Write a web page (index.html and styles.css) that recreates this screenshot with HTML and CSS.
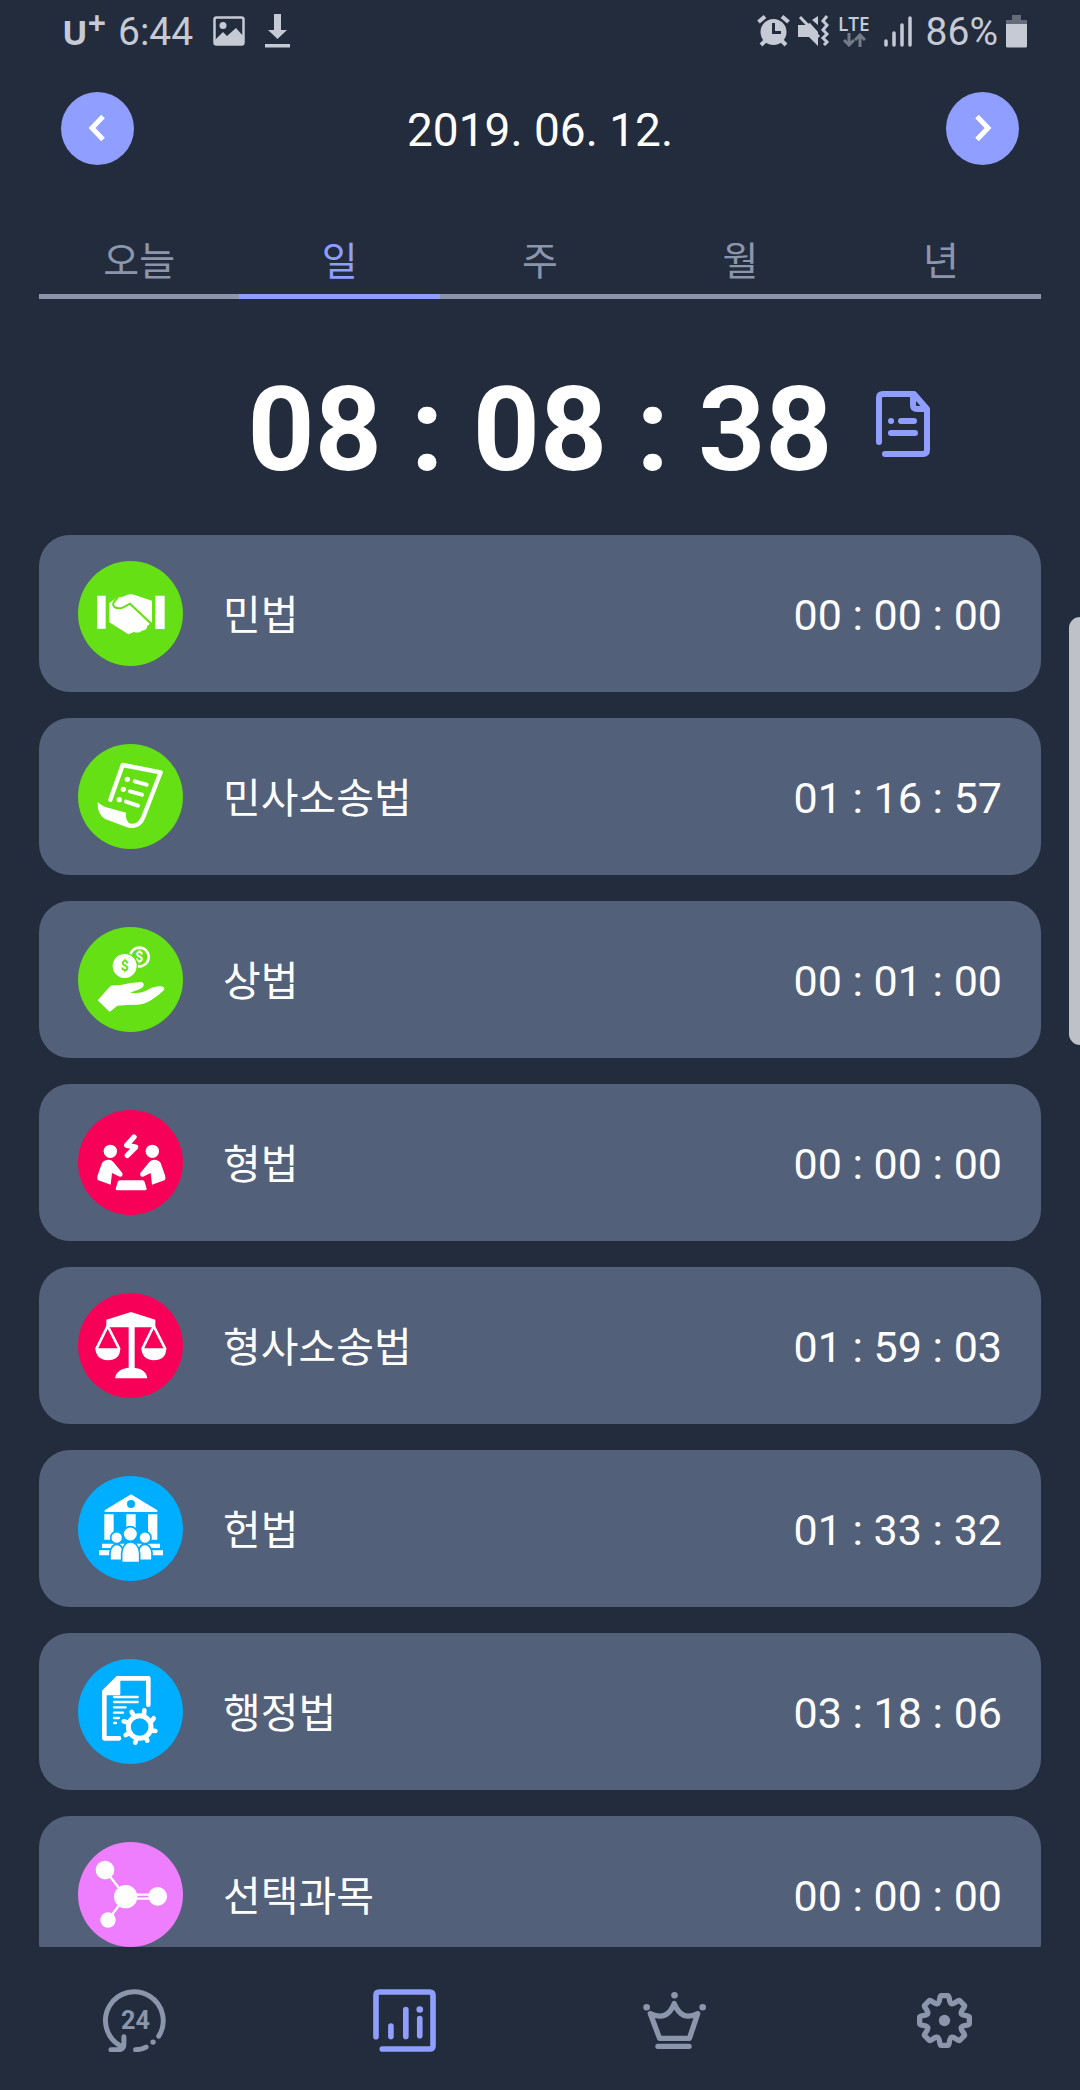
FILE: index.html
```html
<!DOCTYPE html>
<html lang="ko">
<head>
<meta charset="utf-8">
<meta name="viewport" content="width=device-width, initial-scale=1">
<title>학습 시간 통계</title>
<link rel="stylesheet" href="styles.css">
</head>
<body>
<div class="app">
  <div class="status">
    <div class="status-group">
      <span class="carrier">U<span class="carrier-plus">+</span></span>
      <span class="status-text clock">6:44</span>
      <svg class="icon-photo" width="32" height="30" viewBox="0 0 32 30"><rect x="1.500" y="1.500" width="29" height="27" rx="2" fill="none" stroke="currentColor" stroke-width="2.500"/><circle cx="10" cy="9.500" r="3.500" fill="currentColor"/><path d="M2 24 10 16l4 4 9-8 8 9v7H2z" fill="currentColor"/></svg>
      <svg width="25" height="34" viewBox="0 0 25 34" fill="currentColor"><path d="M9 0h7v16h6L12.500 25 3 16h6zM0 30h25v3.500H0z"/></svg>
    </div>
    <div class="status-group status-right">
      <svg width="33" height="32" viewBox="0 0 33 32"><circle cx="16.500" cy="17" r="13" fill="currentColor"/><path d="M1.500 7 8 1.500M31.500 7 25 1.500M4 30l5-5M29 30l-5-5" stroke="currentColor" stroke-width="4"/><path class="cut" d="M16.500 8v9.500H24" fill="none" stroke-width="3"/></svg>
      <svg width="32" height="32" viewBox="0 0 32 32"><path d="M0 10h7l5-2 8 9v14l-9-9H0zM20 1v9l-6-5z" fill="currentColor"/><path d="M2 2l19 20" stroke="currentColor" stroke-width="3"/><path d="M29 1l-4 5 4 4-4 5 4 4-4 4 4 4-3 3" fill="none" stroke="currentColor" stroke-width="3"/></svg>
      <div class="network"><span>LTE</span><svg width="24" height="14" viewBox="0 0 24 14" fill="none" stroke="currentColor" stroke-width="3"><path d="M7 0v12M2 7l5 5 5-5M18 14V2M13 7l5-5 5 5"/></svg></div>
      <svg class="signal" width="28" height="31" viewBox="0 0 28 31" stroke="currentColor" stroke-width="3.500" stroke-linecap="round"><path d="M2 25v4M10 17v12M18 9v20M26 2v27"/></svg>
      <span class="status-text">86%</span>
      <svg class="battery" width="21" height="33" viewBox="0 0 21 33" fill="currentColor"><path opacity=".4" d="M6 0h9v5h6v4H0V5h6z"/><path d="M0 9h21v22q0 1.500-1.500 1.500h-18Q0 32.500 0 31z"/></svg>
    </div>
  </div>

  <header class="date-bar">
    <button class="round" type="button" aria-label="이전 날짜"><svg width="73" height="73" viewBox="0 0 73 73"><path d="M42 24.500 31 36l11 11.500"/></svg></button>
    <h1 class="date">2019. 06. 12.</h1>
    <button class="round" type="button" aria-label="다음 날짜"><svg width="73" height="73" viewBox="0 0 73 73"><path d="M31 24.500 42 36 31 47.500"/></svg></button>
  </header>

  <nav class="tabs" aria-label="기간">
    <button class="tab" type="button">오늘</button>
    <button class="tab tab-active" type="button" aria-current="true">일</button>
    <button class="tab" type="button">주</button>
    <button class="tab" type="button">월</button>
    <button class="tab" type="button">년</button>
  </nav>

  <section class="total">
    <span class="total-time">08 : 08 : 38</span>
    <button class="note" type="button" aria-label="기록 보기"><svg width="54" height="66" viewBox="0 0 54 66" fill="none" stroke="currentColor" stroke-width="6" stroke-linecap="round" stroke-linejoin="round"><path d="M3 51V7q0-4 4-4h31l13 15v41q0 4-4 4H9M37 4v10q0 4 4 4h9M15 30h.1M25 30h13M15 42h24"/></svg></button>
  </section>

  <main class="list">
    <article class="card">
      <svg class="badge green" viewBox="144 107 315 315"><path d="M201 211h26v99h-26zM376 211h28v100h-28z"/><path d="M238 233 258 219 283 213Q298 203 314 209L366 226V290L352 302Q350 316 336 316 326 325 312 320L295 327 238 291z"/><path class="line" stroke-width="6" d="M262 219Q243 235 252 244 264 253 280 246L300 235 362 294"/></svg>
      <h2 class="name">민법</h2><span class="time">00 : 00 : 00</span>
    </article>
    <article class="card">
      <svg class="badge green" viewBox="144 657 315 315"><path class="stroke" stroke-width="13" d="M241 824 278 720 392 742 341 874Q329 907 300 902"/><path d="M203 831Q215 844 240 850L288 863Q284 885 301 897L314 908Q295 911 275 901L225 882Q201 868 203 831z"/><path class="stroke" stroke-width="12" d="M314 769l36 10M300 799l36 10M288 830l36 12"/><circle cx="292" cy="763" r="8"/><circle cx="280" cy="793" r="8"/><circle cx="268" cy="824" r="8"/></svg>
      <h2 class="name">민사소송법</h2><span class="time">01 : 16 : 57</span>
    </article>
    <article class="card">
      <svg class="badge green" viewBox="144 111 315 315"><circle class="stroke" cx="328" cy="201" r="28" stroke-width="8"/><text class="coin-mark" x="328" y="216">$</text><circle class="line-fill" cx="284" cy="228" r="38" stroke-width="4"/><text class="coin-mark coin-front" x="284" y="244">$</text><path d="M203 331 239 290Q243 286 252 286L272 285Q300 277 335 276 346 282 338 292 330 299 300 308 330 312 345 304 365 291 385 289 404 287 403 298 395 310 365 329 345 343 322 344 290 344 262 347L239 366z"/></svg>
      <h2 class="name">상법</h2><span class="time">00 : 01 : 00</span>
    </article>
    <article class="card">
      <svg class="badge pink" viewBox="144 659 315 315"><circle cx="241" cy="783" r="20"/><circle cx="367" cy="783" r="20"/><path class="stroke" stroke-width="16" d="M312 740 290 765 317 770 292 795"/><path d="M230 809Q242 806 250 815L277 848Q280 860 269 859L246 848 242 883 205 870Q200 868 203 855L216 818Q220 810 230 809z"/><path d="M378 809Q366 806 358 815L331 848Q328 860 339 859L362 848 366 883 403 870Q408 868 405 855L392 818Q388 810 378 809z"/><path d="M270 870h68q5 0 6 5l6 20q0 5-5 5h-83q-5 0-5-5l6-20q2-5 7-5z"/></svg>
      <h2 class="name">형법</h2><span class="time">00 : 00 : 00</span>
    </article>
    <article class="card">
      <svg class="badge pink" viewBox="144 98 315 315"><path d="M229 178 303 155 376 178V201H229zM296 200h18v125h-18zM255 354Q257 335 278 326L303 320 330 326Q350 335 352 354zM196 264h75Q270 300 233 300 198 298 196 264zM334 264h75Q408 300 371 300 336 298 334 264z"/><path class="stroke" stroke-width="8" d="M200 264 233 197 267 264M338 264 371 197 405 264"/></svg>
      <h2 class="name">형사소송법</h2><span class="time">01 : 59 : 03</span>
    </article>
    <article class="card">
      <svg class="badge blue" viewBox="144 648 315 315"><path d="M303 703 382 751V756H224V751zM223 763h28v76h-28zM289 763h28v76h-28zM354 763h28v76h-28zM216 851h174v13H216zM207 871h192v15H207z"/><circle class="hole" cx="303" cy="732" r="12"/><g class="line-fill" stroke-width="5"><circle cx="260" cy="833" r="18"/><circle cx="345" cy="833" r="18"/><path d="M240 901V878Q244 853 260 853 278 853 280 878V901zM325 901V878Q327 853 345 853 362 853 366 878V901z"/><circle cx="301" cy="822" r="22"/><path d="M275 908V880Q279 846 301 846 325 846 329 880V908z"/></g></svg>
      <h2 class="name">헌법</h2><span class="time">01 : 33 : 32</span>
    </article>
    <article class="card">
      <svg class="badge blue" viewBox="144 117 315 315"><path class="stroke" stroke-width="14" d="M355 254V175H263L223 215V355H267"/><path d="M217 213 260 169h11v53q0 4-4 4h-50z"/><path class="stroke" stroke-width="7" d="M252 231h71M252 246h71M252 262h35M252 278h27M252 294h15M252 309h6"/><circle class="hole" cx="329" cy="321" r="49"/><circle class="stroke" cx="329" cy="321" r="34" stroke-width="15"/><path class="stroke" stroke-width="14" d="M342 283 343 271M365 303 371 295M368 332 376 333M348 354 352 362M318 361 316 368M294 341 287 345M291 307 281 304M310 284 305 276"/></svg>
      <h2 class="name">행정법</h2><span class="time">03 : 18 : 06</span>
    </article>
    <article class="card">
      <svg class="badge violet" viewBox="144 666 315 315"><path class="stroke" stroke-width="7" d="M225 750 287 830 234 900M287 824h96M287 836h96"/><circle cx="225" cy="750" r="28"/><circle cx="287" cy="830" r="35"/><circle cx="383" cy="829" r="28"/><circle cx="234" cy="900" r="23"/></svg>
      <h2 class="name">선택과목</h2><span class="time">00 : 00 : 00</span>
    </article>
  </main>

  <nav class="bottom" aria-label="메뉴">
    <a class="bottom-link" href="#timer" aria-label="타이머"><svg viewBox="68 56 190 190"><path stroke-width="15" d="M236 198A87 87 0 1 0 118 226M92 239H118Q131 237 131 222V200M118 226 125 233M166 239Q185 239 198 231"/><circle class="dot" cx="219" cy="216" r="8"/><text class="day-mark" x="166" y="178">24</text></svg></a>
    <a class="bottom-link bottom-active" href="#stats" aria-label="통계" aria-current="page"><svg viewBox="879 56 190 190"><path stroke-width="17" d="M888 200V75Q888 65 898 65H1050Q1060 65 1060 75V227Q1060 237 1050 237H907M933 168V199M978 118V199M1020 145V197"/><circle class="dot" cx="1020" cy="118" r="10"/></svg></a>
    <a class="bottom-link" href="#ranking" aria-label="랭킹"><svg viewBox="127 56 190 190"><path stroke-width="16" d="M149 130Q200 155 221 100 243 155 292 130L267 205H177zM172 229H266"/><circle class="dot" cx="138" cy="111" r="10"/><circle class="dot" cx="222" cy="75" r="10"/><circle class="dot" cx="307" cy="111" r="10"/></svg></a>
    <a class="bottom-link" href="#settings" aria-label="설정"><svg viewBox="-95 -95 190 190"><g stroke-width="16"><path id="tooth" d="M-21-51C-12-54-17-75-10-75H10C17-75 12-54 21-51"/><use href="#tooth" transform="rotate(45)"/><use href="#tooth" transform="rotate(90)"/><use href="#tooth" transform="rotate(135)"/><use href="#tooth" transform="rotate(180)"/><use href="#tooth" transform="rotate(225)"/><use href="#tooth" transform="rotate(270)"/><use href="#tooth" transform="rotate(315)"/></g><circle class="dot" r="17"/></svg></a>
  </nav>
  <div class="edge-handle"></div>
</div>
</body>
</html>
```

FILE: styles.css
```css
:root {
  --bg: #232c3d;
  --card: #53607a;
  --accent: #8f9eff;
  --muted: #8b96ac;
  --status: #c6cad4;
}

* {
  box-sizing: border-box;
}

body {
  margin: 0;
  background: var(--bg);
  color: #fff;
  font-family: Roboto, "Noto Sans CJK KR", sans-serif;
}

button {
  padding: 0;
  border: 0;
  background: none;
  font: inherit;
  cursor: pointer;
}

svg {
  display: block;
  flex: none;
}

.app {
  display: flex;
  flex-direction: column;
  height: 100vh;
}

/* Status bar */
.status {
  display: flex;
  justify-content: space-between;
  align-items: center;
  flex: none;
  height: 62px;
  padding: 0 53px 0 62px;
  color: var(--status);
}

.status-group {
  display: flex;
  align-items: center;
  gap: 20px;
}

.status-right {
  gap: 8px;
}

.carrier {
  display: flex;
  padding-top: 2px;
  font: 700 34px/40px "Open Sans", sans-serif;
}

.carrier-plus {
  font-size: 32px;
  line-height: 22px;
}

.status-text {
  padding-top: 2px;
  font-size: 39px;
  line-height: 46px;
}

.clock {
  margin-left: -8px;
}

.network {
  display: flex;
  flex-direction: column;
  align-items: center;
  font: 600 19px/18px "Open Sans", sans-serif;
}

.network svg {
  opacity: 0.5;
}

.signal {
  margin: 0 6px;
}

.cut {
  stroke: var(--bg);
}

/* Date switcher */
.date-bar {
  display: flex;
  justify-content: space-between;
  align-items: center;
  flex: none;
  padding: 30px 61px 0;
}

.round {
  border-radius: 50%;
  background: var(--accent);
}

.round path {
  fill: none;
  stroke: #fff;
  stroke-width: 5;
}

.date {
  margin: 0;
  padding-top: 2px;
  font-size: 46px;
  font-weight: 400;
  line-height: 56px;
}

/* Period tabs */
.tabs {
  display: flex;
  flex: none;
  margin: 63px 39px 0;
}

.tab {
  flex: 1;
  height: 71px;
  padding-top: 2px;
  border-bottom: 5px solid var(--muted);
  color: var(--muted);
  font-size: 39px;
  line-height: 56px;
}

.tab-active {
  border-color: var(--accent);
  color: var(--accent);
}

/* Total time */
.total {
  display: grid;
  grid-template-columns: 1fr auto 1fr;
  align-items: center;
  column-gap: 43px;
  flex: none;
  height: 236px;
  padding-top: 14px;
}

.total-time {
  grid-column: 2;
  padding-top: 12px;
  font-size: 117px;
  font-weight: 700;
  line-height: 136px;
}

.note {
  justify-self: start;
  color: var(--accent);
}

/* Subject list */
.list {
  display: flex;
  flex: 1;
  flex-direction: column;
  gap: 26px;
  min-height: 0;
  padding: 0 39px;
  overflow-y: auto;
  scrollbar-width: none;
}

.card {
  display: flex;
  flex: none;
  align-items: center;
  padding: 26px 39px;
  border-radius: 31px;
  background: var(--card);
}

.badge {
  width: 105px;
  height: 105px;
  margin-right: 40px;
  border-radius: 50%;
  background: var(--tint);
  fill: #fff;
}

.green {
  --tint: #64e014;
}

.pink {
  --tint: #f70058;
}

.blue {
  --tint: #00aeff;
}

.violet {
  --tint: #ee7efe;
}

.badge .stroke,
.badge .line {
  fill: none;
  stroke: #fff;
  stroke-linecap: round;
  stroke-linejoin: round;
}

.badge .line,
.line-fill {
  stroke: var(--tint);
}

.badge .hole,
.coin-front {
  fill: var(--tint);
}

.coin-mark {
  font-size: 42px;
  font-weight: 700;
  text-anchor: middle;
}

.name {
  flex: 1;
  margin: 0;
  padding-top: 4px;
  font-size: 41px;
  font-weight: 400;
  line-height: 60px;
}

.time {
  padding-top: 2px;
  font-size: 43px;
  line-height: 50px;
}

/* Bottom navigation */
.bottom {
  display: flex;
  flex: none;
  height: 143px;
}

.bottom-link {
  display: flex;
  flex: 1;
  align-items: center;
  justify-content: center;
  padding: 4px 2px 0 0;
  color: var(--muted);
}

.bottom-link svg {
  width: 63px;
  height: 63px;
  fill: none;
  stroke: currentColor;
  stroke-linecap: round;
  stroke-linejoin: round;
}

.bottom-link .dot,
.bottom-link .day-mark {
  fill: currentColor;
}

.bottom-link .dot,
.bottom-link .day-mark {
  stroke: none;
}

.day-mark {
  font-size: 76px;
  font-weight: 700;
  text-anchor: middle;
}

.bottom-active {
  color: var(--accent);
}

/* System edge panel handle, floating over the page */
.edge-handle {
  position: fixed;
  top: 617px;
  right: 0;
  width: 11px;
  height: 428px;
  border-radius: 11px 0 0 11px;
  background: #bfc1c8;
}
```
